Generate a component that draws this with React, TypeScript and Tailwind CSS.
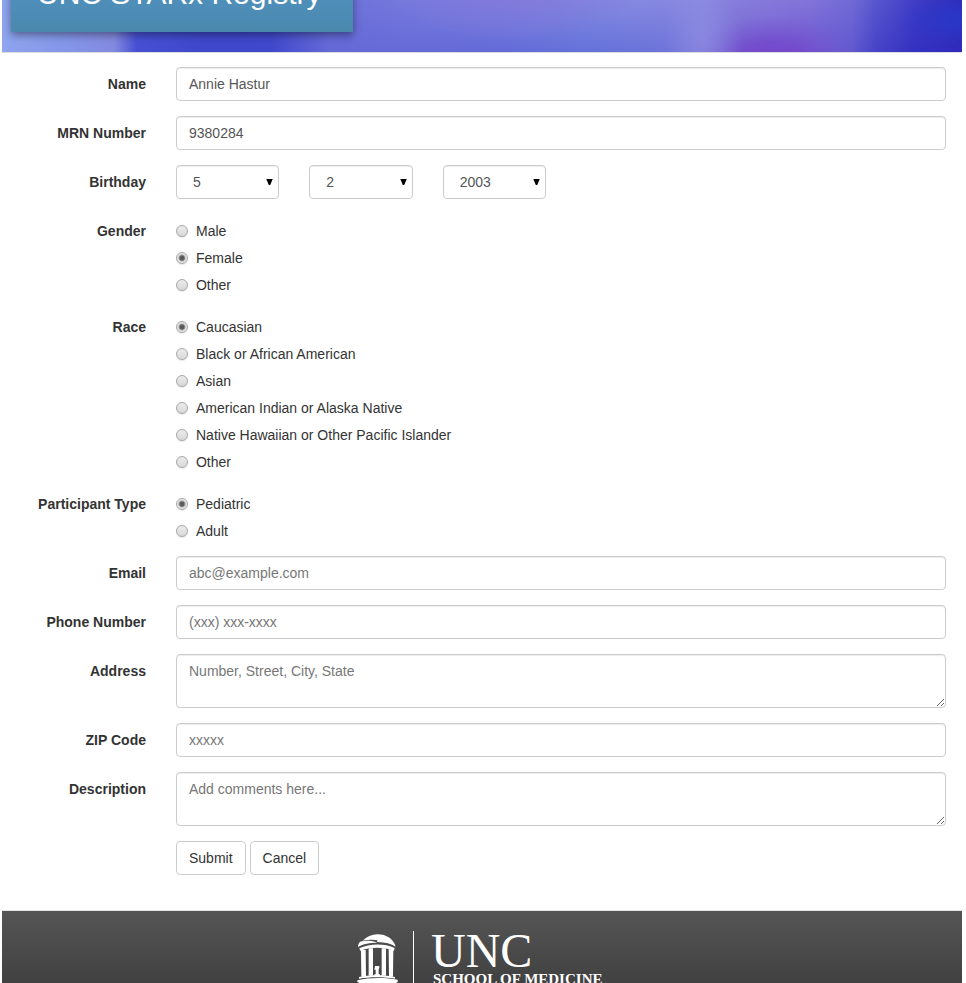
import React from "react";

const control =
  "block w-full rounded border border-[#cccccc] bg-white px-3 text-sm text-[#555555] shadow-[inset_0_1px_1px_rgba(0,0,0,0.075)] outline-none placeholder:text-[#777777] focus:border-[#66afe9]";

const labelStyle = "w-1/6 shrink-0 px-[15px] pt-[7px] text-right text-sm font-bold text-[#333333]";

function TextRow({ id, label, value, placeholder, type = "text" }: {
  id: string;
  label: string;
  value?: string;
  placeholder?: string;
  type?: string;
}) {
  return (
    <div className="flex">
      <label htmlFor={id} className={labelStyle}>{label}</label>
      <div className="grow px-[15px]">
        <input id={id} type={type} defaultValue={value} placeholder={placeholder} className={control + " h-[34px]"} />
      </div>
    </div>
  );
}

function AreaRow({ id, label, placeholder }: { id: string; label: string; placeholder: string }) {
  return (
    <div className="flex">
      <label htmlFor={id} className={labelStyle}>{label}</label>
      <div className="grow px-[15px]">
        <textarea id={id} placeholder={placeholder} className={control + " h-[54px] resize py-[6px] leading-5"} />
      </div>
    </div>
  );
}

function DateSelect({ name, label, value, options }: {
  name: string;
  label: string;
  value: number;
  options: number[];
}) {
  return (
    <div className="w-1/6 px-[15px]">
      <div className="relative">
        <select name={name} aria-label={label} defaultValue={value} className={control + " h-[34px] appearance-none pl-4"}>
          {options.map((n) => (
            <option key={n} value={n}>{n}</option>
          ))}
        </select>
        <svg className="pointer-events-none absolute top-[14px] right-[6px]" width="7" height="7" viewBox="0 0 7 7" aria-hidden="true">
          <path d="M0.3 0h6.4L4.2 6H2.8z" fill="#000" />
        </svg>
      </div>
    </div>
  );
}

function RadioRow({ name, label, options, selected }: {
  name: string;
  label: string;
  options: string[];
  selected?: string;
}) {
  return (
    <div className="flex" role="radiogroup" aria-labelledby={name + "-label"}>
      <div id={name + "-label"} className={labelStyle}>{label}</div>
      <div className="grow px-[15px]">
        {options.map((option) => (
          <label key={option} className="flex items-center gap-2 pt-[7px] text-sm text-[#333333]">
            <input
              type="radio"
              name={name}
              value={option}
              defaultChecked={option === selected}
              className="size-3 shrink-0 appearance-none rounded-full border border-[#a8a8a8] bg-linear-to-b from-[#ebebeb] to-[#d9d9d9] shadow-[0_1px_1px_rgba(0,0,0,0.1)] checked:bg-[radial-gradient(circle,#5a5a5a_0,#5a5a5a_2px,#e6e6e6_4px)]"
            />
            {option}
          </label>
        ))}
      </div>
    </div>
  );
}

function Backdrop() {
  return (
    <svg className="absolute inset-0 size-full" viewBox="0 0 960 52" preserveAspectRatio="none" aria-hidden="true">
      <defs>
        <linearGradient id="sky" x1="0" x2="1" y1="0" y2="0">
          <stop offset="0" stopColor="#8fa5ef" />
          <stop offset="0.06" stopColor="#8497e8" />
          <stop offset="0.117" stopColor="#8389de" />
          <stop offset="0.14" stopColor="#4750d3" />
          <stop offset="0.21" stopColor="#3f47cb" />
          <stop offset="0.28" stopColor="#4048cc" />
          <stop offset="0.34" stopColor="#6469d6" />
          <stop offset="0.42" stopColor="#666bd9" />
          <stop offset="0.52" stopColor="#646bd8" />
          <stop offset="0.61" stopColor="#6472da" />
          <stop offset="0.69" stopColor="#6e74da" />
          <stop offset="0.73" stopColor="#7d7ddc" />
          <stop offset="0.76" stopColor="#7465d3" />
          <stop offset="0.83" stopColor="#7057d0" />
          <stop offset="0.885" stopColor="#6259d0" />
          <stop offset="0.91" stopColor="#4643c7" />
          <stop offset="0.95" stopColor="#3531c2" />
          <stop offset="1" stopColor="#302bbb" />
        </linearGradient>
        <linearGradient id="fade" x1="0" x2="1" y1="0" y2="0">
          <stop offset="0" stopColor="#9a9ce6" stopOpacity="0.2" />
          <stop offset="0.4" stopColor="#9a9ce6" stopOpacity="0.6" />
          <stop offset="0.75" stopColor="#9088e0" stopOpacity="0.6" />
          <stop offset="1" stopColor="#6a70d8" stopOpacity="0" />
        </linearGradient>
        <linearGradient id="down" x1="0" x2="0" y1="0" y2="1">
          <stop offset="0" stopColor="#fff" />
          <stop offset="1" stopColor="#000" />
        </linearGradient>
        <mask id="topLight">
          <rect width="960" height="52" fill="url(#down)" />
        </mask>
        <radialGradient id="violet">
          <stop offset="0" stopColor="#7643cb" />
          <stop offset="0.4" stopColor="#7449cc" stopOpacity="0.8" />
          <stop offset="1" stopColor="#7b60d2" stopOpacity="0" />
        </radialGradient>
        <radialGradient id="mauve">
          <stop offset="0" stopColor="#8974d8" stopOpacity="0.85" />
          <stop offset="0.8" stopColor="#7f77db" stopOpacity="0.35" />
          <stop offset="1" stopColor="#7f77db" stopOpacity="0.1" />
        </radialGradient>
        <radialGradient id="glow">
          <stop offset="0" stopColor="#8d8ae1" stopOpacity="0.7" />
          <stop offset="1" stopColor="#8d8ae1" stopOpacity="0" />
        </radialGradient>
        <radialGradient id="blue">
          <stop offset="0" stopColor="#2938c8" />
          <stop offset="1" stopColor="#2938c8" stopOpacity="0" />
        </radialGradient>
      </defs>
      <rect width="960" height="52" fill="url(#sky)" />
      <rect x="350" width="610" height="52" fill="url(#fade)" mask="url(#topLight)" />
      <ellipse cx="510" cy="-20" rx="130" ry="58" fill="url(#mauve)" />
      <ellipse cx="770" cy="60" rx="85" ry="46" fill="url(#violet)" />
      <ellipse cx="702" cy="40" rx="38" ry="60" fill="url(#glow)" />
      <ellipse cx="965" cy="20" rx="70" ry="26" fill="url(#blue)" />
    </svg>
  );
}

function OldWell() {
  return (
    <svg width="42" height="56" viewBox="21 27 126 168" fill="#fff" aria-hidden="true">
      <path d="M38 47C50 35 65 28 82 28c28 0 48 14 55 37-13-9-31-13-55-14-3-2 2-4 0-5-10-3-27-2-44 1Z" />
      <path d="M30 50c16-4 38-3 52 3-22 0-43 3-58 13 0-6 2-11 6-16Z" />
      <path d="M28 70c30-15 77-15 106-1l-2 8c-29-12-72-12-101 0Z" />
      <path d="M33 75h14l1 80H34zM56 70h13v82H56zM95 70h13v82H95zM116 73h14l-1 82h-12z" />
      <path d="M75 123h13v6l-2 4v15h4v6H73v-6h4v-14h-4z" />
      <path d="M27 156c30-7 79-7 108 0v5c-30-6-78-6-108 0Z" />
      <path d="M22 166c34-9 87-9 121-2v8c-5 1-8 4-10 8H30c-1-5-4-8-8-9Z" />
    </svg>
  );
}

const range = (from: number, to: number) => Array.from({ length: to - from + 1 }, (_, i) => from + i);

export default function App() {
  return (
    <div className="bg-white pr-1 pl-px font-['Liberation_Sans',Arial,sans-serif] text-sm text-[#333333]">
      <header className="relative ml-px flex h-[53px] items-end overflow-hidden border-b border-[#dddddd] pb-5 pl-[9px]">
        <Backdrop />
        <h1 className="relative flex h-20 shrink-0 items-end bg-linear-to-b from-[#5499ce] to-[#4a88ad] pr-8 pb-5 pl-[26px] text-[30px] leading-9 text-white shadow-[0_3px_8px_rgba(0,0,0,0.4)]">
          UNC STARx Registry
        </h1>
      </header>

      <form className="mr-px flex flex-col gap-[15px] pt-[14px] pb-[35px]" onSubmit={(e) => e.preventDefault()}>
        <TextRow id="name" label="Name" value="Annie Hastur" />
        <TextRow id="mrn" label="MRN Number" value="9380284" />
        <div className="flex" role="group" aria-labelledby="birthday-label">
          <div id="birthday-label" className={labelStyle}>Birthday</div>
          <div className="flex grow">
            <DateSelect name="month" label="Month" value={5} options={range(1, 12)} />
            <DateSelect name="day" label="Day" value={2} options={range(1, 31)} />
            <DateSelect name="year" label="Year" value={2003} options={range(1920, 2015)} />
          </div>
        </div>
        <RadioRow name="gender" label="Gender" options={["Male", "Female", "Other"]} selected="Female" />
        <RadioRow
          name="race"
          label="Race"
          options={[
            "Caucasian",
            "Black or African American",
            "Asian",
            "American Indian or Alaska Native",
            "Native Hawaiian or Other Pacific Islander",
            "Other",
          ]}
          selected="Caucasian"
        />
        <RadioRow name="participant" label="Participant Type" options={["Pediatric", "Adult"]} selected="Pediatric" />
        <TextRow id="email" label="Email" type="email" placeholder="abc@example.com" />
        <TextRow id="phone" label="Phone Number" type="tel" placeholder="(xxx) xxx-xxxx" />
        <AreaRow id="address" label="Address" placeholder="Number, Street, City, State" />
        <TextRow id="zip" label="ZIP Code" placeholder="xxxxx" />
        <AreaRow id="description" label="Description" placeholder="Add comments here..." />
        <div className="ml-[16.6667%] flex gap-1 px-[15px]">
          <button type="submit" className="h-[34px] rounded border border-[#cccccc] bg-white px-3 text-sm">Submit</button>
          <button type="button" className="h-[34px] rounded border border-[#cccccc] bg-white px-3 text-sm">Cancel</button>
        </div>
      </form>

      <footer className="ml-px flex h-[73px] items-start justify-center overflow-hidden border-t border-[#e0e4e2] bg-linear-to-b from-[#555555] to-[#414141] pt-5">
        <div className="flex items-start">
          <div className="pt-[3px]">
            <OldWell />
          </div>
          <div className="ml-[14px] h-16 w-px bg-white" />
          <div className="ml-[17px] flex w-44 flex-col font-['Liberation_Serif','Times_New_Roman',serif] whitespace-nowrap text-white">
            <span className="text-[48px] leading-10">UNC</span>
            <span className="pl-0.5 text-[15px] leading-4 font-bold">SCHOOL OF MEDICINE</span>
          </div>
        </div>
      </footer>
    </div>
  );
}
